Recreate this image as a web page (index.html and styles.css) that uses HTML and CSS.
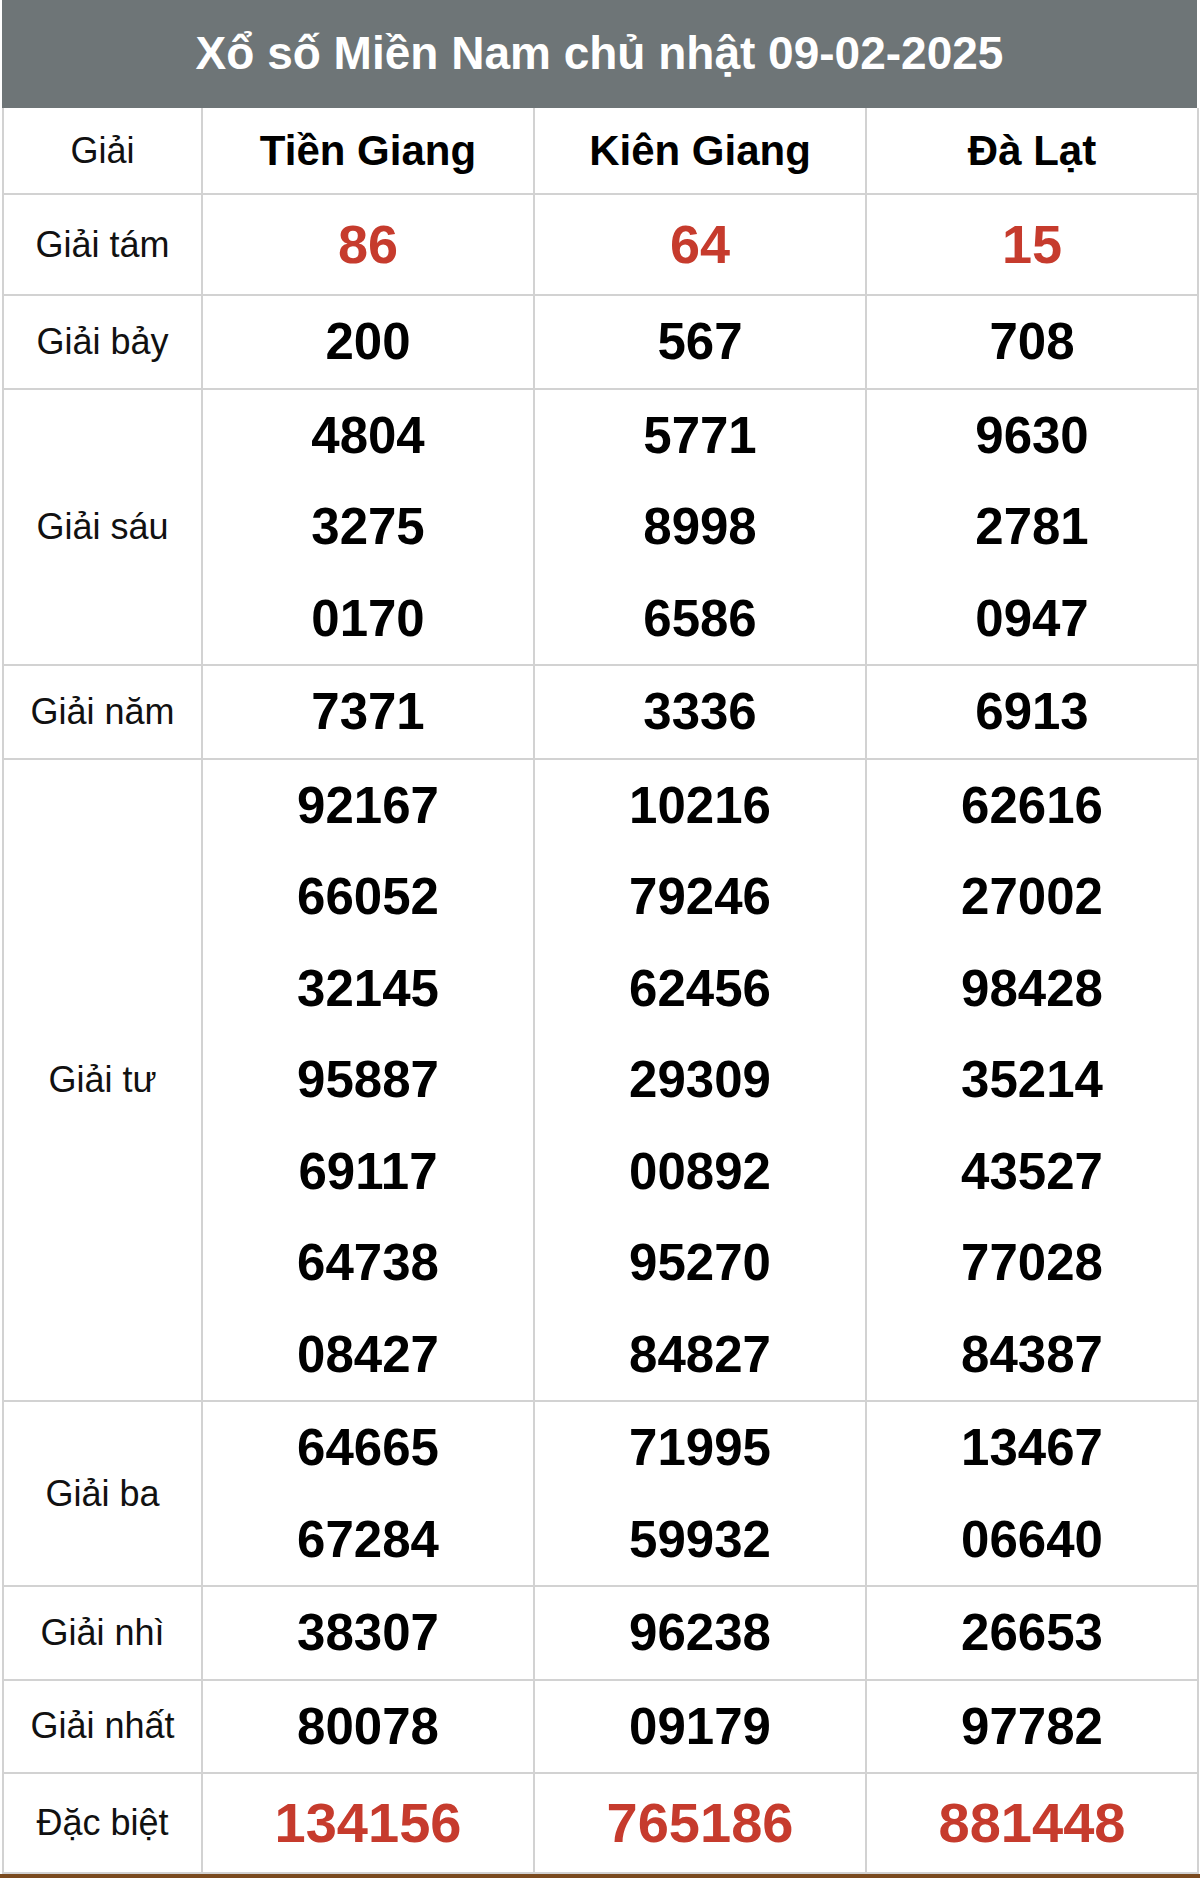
FILE: index.html
```html
<!DOCTYPE html>
<html lang="vi">
<head>
<meta charset="utf-8">
<title>Xổ số Miền Nam chủ nhật 09-02-2025</title>
<link rel="stylesheet" href="styles.css">
</head>
<body>
<div class="page">
  <h1 class="title">Xổ số Miền Nam chủ nhật 09-02-2025</h1>
  <table class="kq">
    <colgroup>
      <col class="c-label">
      <col class="c-prov">
      <col class="c-prov">
      <col class="c-prov">
    </colgroup>
    <tr class="r-head">
      <td class="label">Giải</td>
      <td class="prov">Tiền Giang</td>
      <td class="prov">Kiên Giang</td>
      <td class="prov">Đà Lạt</td>
    </tr>
    <tr class="r-tam">
      <td class="label">Giải tám</td>
      <td><div class="n red">86</div></td>
      <td><div class="n red">64</div></td>
      <td><div class="n red">15</div></td>
    </tr>
    <tr>
      <td class="label">Giải bảy</td>
      <td><div class="n">200</div></td>
      <td><div class="n">567</div></td>
      <td><div class="n">708</div></td>
    </tr>
    <tr>
      <td class="label">Giải sáu</td>
      <td><div class="n">4804</div><div class="n">3275</div><div class="n">0170</div></td>
      <td><div class="n">5771</div><div class="n">8998</div><div class="n">6586</div></td>
      <td><div class="n">9630</div><div class="n">2781</div><div class="n">0947</div></td>
    </tr>
    <tr>
      <td class="label">Giải năm</td>
      <td><div class="n">7371</div></td>
      <td><div class="n">3336</div></td>
      <td><div class="n">6913</div></td>
    </tr>
    <tr>
      <td class="label">Giải tư</td>
      <td><div class="n">92167</div><div class="n">66052</div><div class="n">32145</div><div class="n">95887</div><div class="n">69117</div><div class="n">64738</div><div class="n">08427</div></td>
      <td><div class="n">10216</div><div class="n">79246</div><div class="n">62456</div><div class="n">29309</div><div class="n">00892</div><div class="n">95270</div><div class="n">84827</div></td>
      <td><div class="n">62616</div><div class="n">27002</div><div class="n">98428</div><div class="n">35214</div><div class="n">43527</div><div class="n">77028</div><div class="n">84387</div></td>
    </tr>
    <tr>
      <td class="label">Giải ba</td>
      <td><div class="n">64665</div><div class="n">67284</div></td>
      <td><div class="n">71995</div><div class="n">59932</div></td>
      <td><div class="n">13467</div><div class="n">06640</div></td>
    </tr>
    <tr>
      <td class="label">Giải nhì</td>
      <td><div class="n">38307</div></td>
      <td><div class="n">96238</div></td>
      <td><div class="n">26653</div></td>
    </tr>
    <tr>
      <td class="label">Giải nhất</td>
      <td><div class="n">80078</div></td>
      <td><div class="n">09179</div></td>
      <td><div class="n">97782</div></td>
    </tr>
    <tr class="r-db">
      <td class="label">Đặc biệt</td>
      <td><div class="n red big">134156</div></td>
      <td><div class="n red big">765186</div></td>
      <td><div class="n red big">881448</div></td>
    </tr>
  </table>
  <div class="bottom-bar"></div>
</div>
</body>
</html>
```

FILE: styles.css
```css
* { box-sizing: border-box; }

html, body {
  margin: 0;
  padding: 0;
  background: #ffffff;
}

body {
  font-family: "Liberation Sans", Arial, sans-serif;
  color: #000;
}

.page {
  width: 1200px;
}

.title {
  margin: 0 3px 0 2px;
  height: 108px;
  background: #6e7577;
  color: #ffffff;
  font-weight: bold;
  font-size: 46px;
  line-height: 106px;
  text-align: center;
  letter-spacing: 0;
}

.kq {
  border-collapse: collapse;
  width: 1195px;
  margin-left: 2px;
  table-layout: fixed;
}

.c-label { width: 199px; }
.c-prov { width: 332px; }

.kq td {
  border: 2px solid #d2d2d2;
  text-align: center;
  vertical-align: middle;
  padding: 0;
}

.kq tr:first-child td { border-top: none; }

.label {
  font-size: 36px;
  color: #111;
}

.prov {
  font-size: 42px;
  font-weight: bold;
  height: 86px;
  line-height: 84px;
}

.n {
  font-size: 51px;
  font-weight: bold;
  line-height: 91.5px;
}

.red { color: #c63b2d; }

.r-tam .n {
  font-size: 54px;
  line-height: 99px;
}

.r-db .n {
  font-size: 56px;
  line-height: 98px;
}

.bottom-bar {
  height: 4px;
  background: #7a4a1f;
}
```
